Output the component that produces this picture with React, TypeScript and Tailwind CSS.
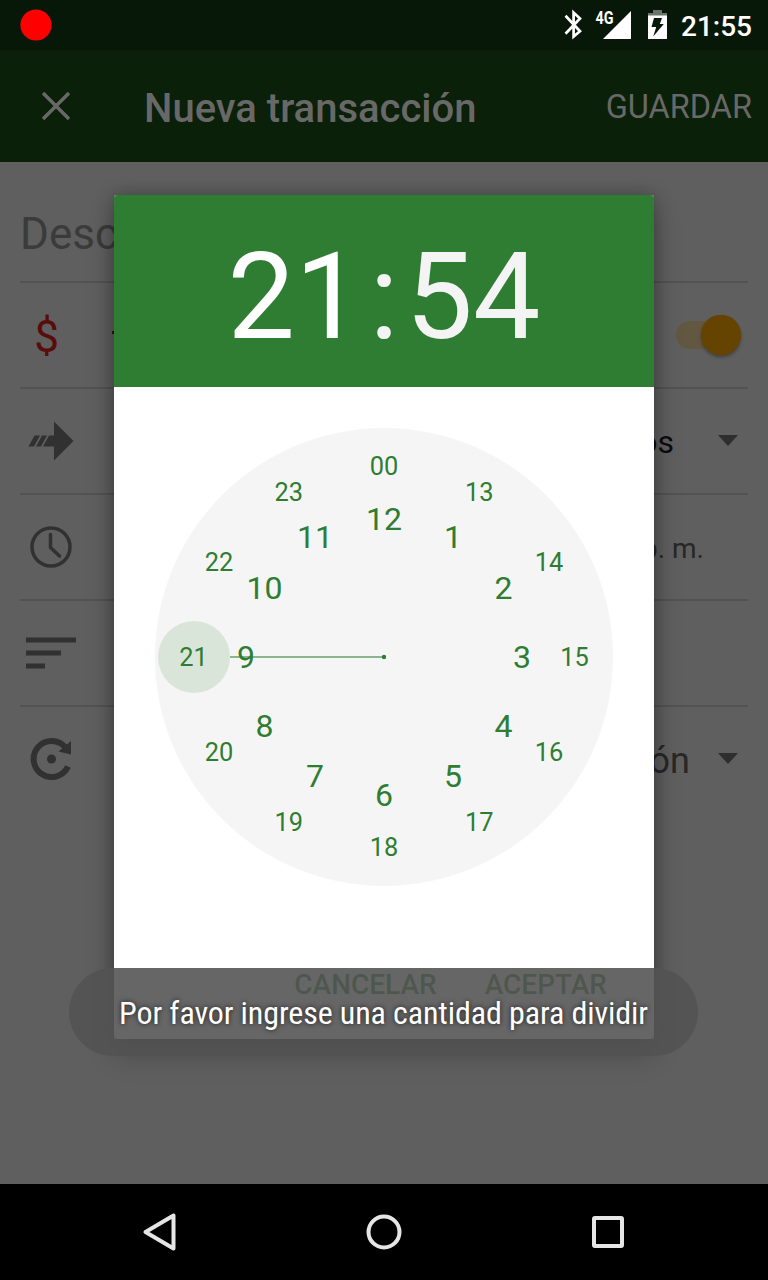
import React from "react";

const outer = ["00", "13", "14", "15", "16", "17", "18", "19", "20", "21", "22", "23"];
const inner = ["12", "1", "2", "3", "4", "5", "6", "7", "8", "9", "10", "11"];

function ring(labels: string[], radius: number, size: number, baseline: number) {
  return labels.map((label, i) => {
    const a = (i * Math.PI) / 6;
    return (
      <text
        key={label}
        x={229 + radius * Math.sin(a)}
        y={229 - radius * Math.cos(a) + baseline}
        fontSize={size}
        textAnchor="middle"
        fill="#2e7d32"
      >
        {label}
      </text>
    );
  });
}

function Dial() {
  return (
    <svg width="458" height="458" viewBox="0 0 458 458" className="mt-[41px] shrink-0 overflow-visible">
      <circle cx="229" cy="229" r="229" fill="#f5f5f5" />
      <circle cx="39" cy="229" r="36" fill="#dae5da" />
      <path d="M75 229H229" stroke="#8bb68d" strokeWidth="2" />
      <circle cx="229" cy="229" r="2.2" fill="#2e7d32" />
      {ring(outer, 190.5, 25.4, 8.9)}
      {ring(inner, 138, 32, 10.7)}
    </svg>
  );
}

function StatusBar() {
  return (
    <div className="flex h-[50px] shrink-0 items-center bg-[#081808] text-white">
      <svg width="32" height="32" viewBox="0 0 32 32" className="ml-5">
        <circle cx="16" cy="16" r="15.6" fill="#f00" />
      </svg>
      <svg width="200" height="50" viewBox="556 0 200 50" className="ml-[504px] overflow-visible">
        <path d="M565.500 15.800 580 31.200 573.600 36.600V12.600L580 18.500 565.500 33.800" fill="none" stroke="#fff" strokeWidth="2.7" />
        <path d="M631 11V39H603z" fill="#fff" />
        <text x="595.5" y="23.8" fontSize="17.5" fontWeight="700" fill="#fff" textLength="18" lengthAdjust="spacingAndGlyphs">4G</text>
        <path d="M653 10h9v3h5v3h-19v-3h5z" fill="#6b746b" />
        <path d="M648 15.500h19V39h-19z" fill="#fff" />
        <path d="M654 18h8l-2.200 6h4l-10.600 12.500 3-9.500h-4.700z" fill="#081808" />
        <text x="681" y="36" fontSize="28" fontWeight="500" fill="#fff" textLength="71">21:55</text>
      </svg>
    </div>
  );
}

function Caret() {
  return (
    <svg width="20" height="11" viewBox="0 0 20 11" className="mb-0.5">
      <path d="M0 0h20L10 11z" fill="#2e2e2e" />
    </svg>
  );
}

function Row({ icon, children }: { icon: React.ReactNode; children?: React.ReactNode }) {
  return (
    <div className="flex h-[106px] shrink-0 items-center justify-between border-b-2 border-[#525252]">
      {icon}
      {children}
    </div>
  );
}

function Form() {
  return (
    <div className="flex grow flex-col bg-[#5f5f5f] px-5">
      <div className="flex h-[121px] shrink-0 items-center border-b-2 border-[#525252] pt-[25px] text-[44px] text-[#3b3b3b]">
        Descripción
      </div>
      <Row
        icon={
          <div className="flex items-center">
            <span className="w-[53px] pt-1 text-center text-[44px] leading-none text-[#590c0c]">$</span>
            <span className="mb-1.5 ml-[39px] h-[3px] w-4 bg-[#400a0a]" />
          </div>
        }
      >
        <svg width="76" height="60" viewBox="672 305 76 60" className="overflow-visible">
          <defs>
            <filter id="knob">
              <feGaussianBlur stdDeviation="1.5" />
            </filter>
          </defs>
          <rect x="676" y="321" width="56" height="28" rx="14" fill="#625740" />
          <circle cx="721" cy="337.5" r="20" fill="#303030" opacity="0.6" filter="url(#knob)" />
          <circle cx="721" cy="335" r="20.2" fill="#654300" />
        </svg>
      </Row>
      <Row
        icon={
          <svg width="60" height="60" viewBox="20 411 60 60" fill="#313131">
            <path d="M54 421.500 73.500 441 54 460.500V446.500H43L49 435.500H54zM28.500 446.500 34.500 435.500H40L34 446.500zM36 446.500 42 435.500H47L41 446.500z" />
          </svg>
        }
      >
        <div className="flex items-center pr-2.5">
          <span className="pr-[44px] pt-0.5 text-[32px] text-[#0c0c0c]">Gastos</span>
          <Caret />
        </div>
      </Row>
      <Row
        icon={
          <svg width="60" height="60" viewBox="20 517 60 60" fill="none" stroke="#313131">
            <circle cx="51" cy="547" r="19" strokeWidth="3.500" />
            <path d="M50.500 534.500V547.500L59.500 556" strokeWidth="3.500" strokeLinecap="round" strokeLinejoin="round" />
          </svg>
        }
      >
        <span className="pr-[44px] pt-1 text-[28px] text-[#272727]">9:54 p. m.</span>
      </Row>
      <Row
        icon={
          <svg width="60" height="60" viewBox="20 623 60 60" fill="#313131">
            <path d="M26 637.500H76V642.500H26zM26 650.500H61V655.500H26zM26 663.500H45V668.500H26z" />
          </svg>
        }
      />
      <div className="flex h-[104px] shrink-0 items-center justify-between">
        <svg width="60" height="60" viewBox="20 729 60 60" fill="none">
          <path d="M68 766.500A18 18 0 1 1 65.500 747.500" stroke="#313131" strokeWidth="6" />
          <path d="M58.500 751.500 71 741V754.500z" fill="#313131" />
          <circle cx="51.500" cy="759" r="4.500" fill="#313131" />
        </svg>
        <div className="flex items-center pr-2.5">
          <span className="pr-[28px] pt-1 text-[36px] text-[#272727]">Transacción</span>
          <Caret />
        </div>
      </div>
    </div>
  );
}

function NavigationBar() {
  return (
    <div className="flex h-24 shrink-0 items-center justify-between bg-black px-[136px]">
      <svg width="48" height="48" viewBox="136 1208 48 48" fill="none" stroke="#e6e6e6" strokeWidth="4">
        <path d="M145.500 1232 173.500 1215.500V1248.500z" strokeLinejoin="round" />
      </svg>
      <svg width="48" height="48" viewBox="360 1208 48 48" fill="none" stroke="#e6e6e6" strokeWidth="4">
        <circle cx="384" cy="1232" r="15.500" />
      </svg>
      <svg width="48" height="48" viewBox="584 1208 48 48" fill="none" stroke="#e6e6e6" strokeWidth="4">
        <rect x="594" y="1218" width="28" height="28" rx="1" />
      </svg>
    </div>
  );
}

export default function App() {
  return (
    <div className="relative flex h-[1280px] w-[768px] flex-col overflow-hidden font-[Roboto,sans-serif]">
      <StatusBar />
      <header className="flex h-28 shrink-0 items-center bg-[#0a2009] pr-4 text-[#686868]">
        <svg width="28" height="28" viewBox="0 0 28 28" className="ml-[42px]">
          <path d="M1 1 27 27M27 1 1 27" stroke="#686868" strokeWidth="3.500" />
        </svg>
        <h1 className="ml-[74px] grow pt-1.5 text-[40px] font-medium">Nueva transacción</h1>
        <button className="pt-0.5 text-[32.500px]">GUARDAR</button>
      </header>
      <Form />
      <NavigationBar />

      <div
        role="dialog"
        className="absolute left-[114px] top-[195px] flex h-[844px] w-[540px] flex-col items-center overflow-hidden rounded-[3px] bg-white shadow-[0_16px_28px_rgba(0,0,0,0.22),0_0_18px_rgba(0,0,0,0.28)]"
      >
        <div className="flex h-48 w-full shrink-0 items-center justify-center bg-[#2e7d32] pt-3 text-[120px] leading-none text-white">
          <span>21</span>
          <span className="mx-[7px] text-[#f4f4f4]">:</span>
          <span className="text-[#f4f4f4]">54</span>
        </div>
        <Dial />
        <div className="mt-[82px] flex w-full justify-end gap-12 pr-[47px] text-[28px] font-medium leading-[34px] text-[#2e7d32]">
          <button>CANCELAR</button>
          <button>ACEPTAR</button>
        </div>
      </div>

      <div className="absolute left-[69px] top-[968px] flex h-[88px] w-[629px] items-center justify-center whitespace-nowrap rounded-full bg-[rgba(82,82,82,0.888)] pt-0.5 font-['Roboto_Condensed',Roboto,sans-serif] text-[32px] tracking-[-0.1px] text-white [text-shadow:0_0_5px_rgba(0,0,0,0.75)]">
        Por favor ingrese una cantidad para dividir
      </div>
    </div>
  );
}
